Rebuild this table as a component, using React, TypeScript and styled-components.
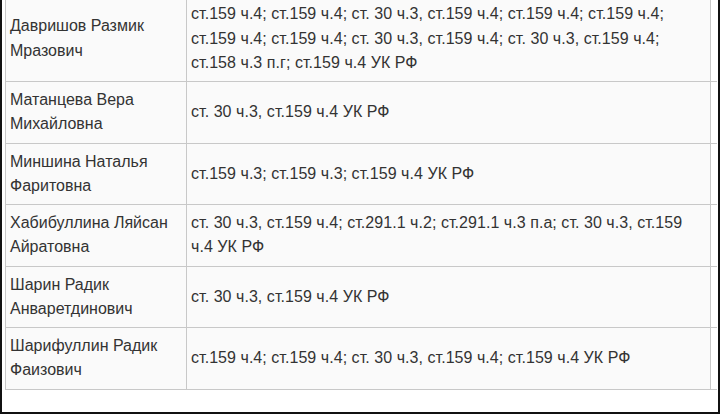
import { createGlobalStyle } from 'styled-components';
import styled from 'styled-components';

const GlobalStyle = createGlobalStyle`
  html,
  body {
    margin: 0;
    padding: 0;
    background: #ffffff;
  }
`;

const Frame = styled.div`
  box-sizing: border-box;
  width: 720px;
  height: 414px;
  overflow: hidden;
  background: #ffffff;
  border: 2px solid #111111;
  border-top: none;
`;

const Table = styled.table`
  margin: -4.75px 0 0 3px;
  width: 711px;
  table-layout: fixed;
  border-collapse: collapse;
  font-family: 'Liberation Sans', Arial, sans-serif;
  font-size: 16px;
  line-height: 24.25px;
  color: #333333;
`;

const Row = styled.tr`
  background: #fafafa;
`;

const Cell = styled.td<{ $wide?: boolean }>`
  padding: 6px ${(p) => (p.$wide ? 12 : 4)}px 6px 4px;
  vertical-align: middle;
  border: 1px solid #c8c8c8;
  letter-spacing: ${(p) => (p.$wide ? '0.05px' : '0')};
`;

const TailCell = styled.td`
  padding: 0;
  background: #ffffff;
  border-top: 1px solid #c8c8c8;
  border-bottom: 1px solid #c8c8c8;
  border-left: 1px solid #c8c8c8;
  border-right: none;
`;

interface Person {
  name: string;
  charges: string;
}

const people: Person[] = [
  {
    name: 'Давришов Размик Мразович',
    charges:
      'ст.159 ч.4; ст.159 ч.4; ст. 30 ч.3, ст.159 ч.4; ст.159 ч.4; ст.159 ч.4; ст.159 ч.4; ст.159 ч.4; ст. 30 ч.3, ст.159 ч.4; ст. 30 ч.3, ст.159 ч.4; ст.158 ч.3 п.г; ст.159 ч.4 УК РФ',
  },
  { name: 'Матанцева Вера Михайловна', charges: 'ст. 30 ч.3, ст.159 ч.4 УК РФ' },
  { name: 'Миншина Наталья Фаритовна', charges: 'ст.159 ч.3; ст.159 ч.3; ст.159 ч.4 УК РФ' },
  {
    name: 'Хабибуллина Ляйсан Айратовна',
    charges: 'ст. 30 ч.3, ст.159 ч.4; ст.291.1 ч.2; ст.291.1 ч.3 п.а; ст. 30 ч.3, ст.159 ч.4 УК РФ',
  },
  { name: 'Шарин Радик Анваретдинович', charges: 'ст. 30 ч.3, ст.159 ч.4 УК РФ' },
  {
    name: 'Шарифуллин Радик Фаизович',
    charges: 'ст.159 ч.4; ст.159 ч.4; ст. 30 ч.3, ст.159 ч.4; ст.159 ч.4 УК РФ',
  },
];

const App = () => (
  <>
    <GlobalStyle />
    <Frame>
      <Table>
        <colgroup>
          <col style={{ width: 181 }} />
          <col style={{ width: 524 }} />
          <col style={{ width: 6 }} />
        </colgroup>
        <tbody>
          {people.map((person) => (
            <Row key={person.name}>
              <Cell>{person.name}</Cell>
              <Cell $wide>{person.charges}</Cell>
              <TailCell />
            </Row>
          ))}
        </tbody>
      </Table>
    </Frame>
  </>
);

export default App;
